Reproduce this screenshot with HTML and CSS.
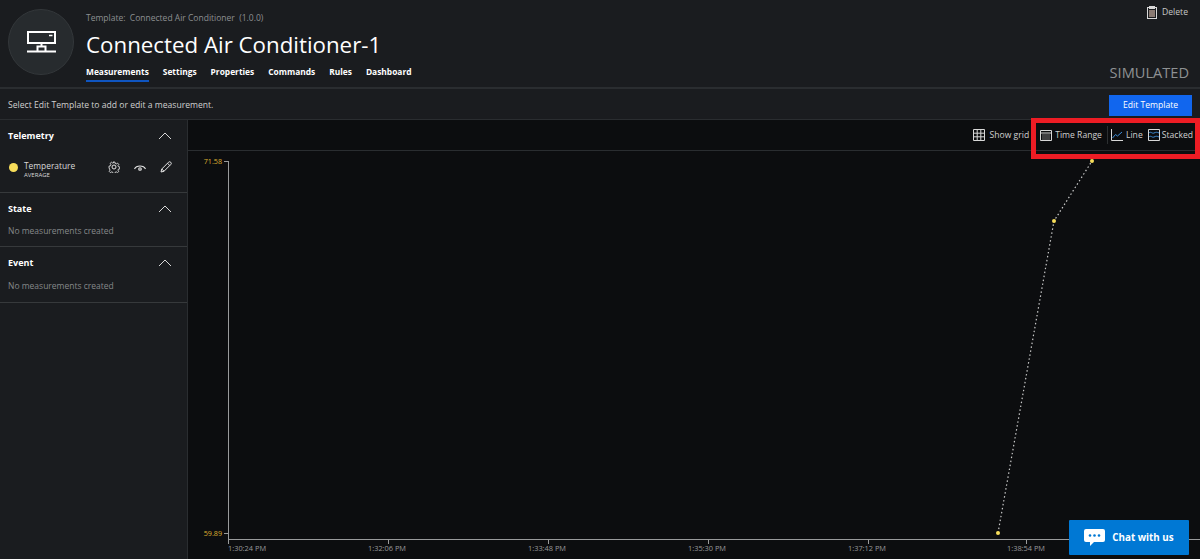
FILE: index.html
```html
<!DOCTYPE html>
<html lang="en">
  <head>
    <meta charset="UTF-8" />
    <title>Connected Air Conditioner-1</title>
    <link rel="stylesheet" href="styles.css">
  </head>

  <body>
    <header class="header">
      <div class="avatar">
        <svg width="29" height="22" viewBox="0 0 29 22" fill="none" stroke="#fff" stroke-width="2">
          <rect x="1" y="1" width="27" height="11" />
          <path d="M22 4.500h3.500" stroke-width="1.500" />
          <path d="M14.500 12v3M10.500 20.500v-5h8v5M0 20.500h29" />
        </svg>
      </div>
      <div class="title-block">
        <div class="template-line">Template:&nbsp; Connected Air Conditioner &nbsp;(1.0.0)</div>
        <h1 class="device-name">Connected Air Conditioner-1</h1>
        <nav class="tabs">
          <a class="tab active">Measurements</a>
          <a class="tab">Settings</a>
          <a class="tab">Properties</a>
          <a class="tab">Commands</a>
          <a class="tab">Rules</a>
          <a class="tab">Dashboard</a>
        </nav>
      </div>
      <div class="header-right">
        <a class="delete">
          <svg width="10" height="13" viewBox="0 0 10 13" fill="none" stroke="#d8d8d8" stroke-width="1">
            <rect x="0.5" y="1.500" width="9" height="11" />
            <rect x="2.500" y="0.500" width="5" height="2" />
            <rect x="2" y="4" width="6" height="7" fill="#8a7a72" stroke="none" />
          </svg>
          Delete
        </a>
        <div class="simulated">SIMULATED</div>
      </div>
    </header>

    <div class="notice-bar">
      <span>Select Edit Template to add or edit a measurement.</span>
      <button class="edit-btn">Edit Template</button>
    </div>

    <main class="main">
      <aside class="sidebar">
        <section class="group group-telemetry">
          <div class="group-head">
            <span>Telemetry</span>
            <svg class="chevron" width="14" height="8" viewBox="0 0 14 8"><path d="M1 7l6-6 6 6" /></svg>
          </div>
          <div class="measure">
            <span class="dot"></span>
            <div class="measure-name">
              <div>Temperature</div>
              <small>AVERAGE</small>
            </div>
            <div class="measure-icons">
              <svg width="12" height="12" viewBox="0 0 24 24" fill="none" stroke="#e6e6e6" stroke-width="2">
                <circle cx="12" cy="12" r="4" />
                <path d="M10 1h4l.7 3.200 2.400 1 2.800-1.800 2.700 2.800-1.800 2.800 1 2.400 3.200.6v4l-3.200.7-1 2.400 1.800 2.800-2.800 2.700-2.800-1.800-2.400 1-.6 3.200h-4l-.7-3.200-2.400-1-2.800 1.800-2.700-2.800 1.800-2.800-1-2.400L1 14v-4l3.200-.7 1-2.400-1.800-2.800 2.800-2.700 2.800 1.800 2.400-1z" transform="translate(1.200 1.200) scale(.9)" />
              </svg>
              <svg width="12" height="9" viewBox="0 0 24 18" fill="none" stroke="#e6e6e6" stroke-width="2.400">
                <path d="M1 12C5 4 19 4 23 12" />
                <circle cx="12" cy="12" r="2.500" />
              </svg>
              <svg width="12" height="12" viewBox="0 0 24 24" fill="none" stroke="#e6e6e6" stroke-width="2">
                <path d="M2 22l1.500-6L17 2.500a3 3 0 0 1 4.500 4.500L8 20.500zM3.500 16L8 20.500M15 4.500l4.500 4.500" />
              </svg>
            </div>
          </div>
        </section>
        <section class="group group-state">
          <div class="group-head">
            <span>State</span>
            <svg class="chevron" width="14" height="8" viewBox="0 0 14 8"><path d="M1 7l6-6 6 6" /></svg>
          </div>
          <p class="empty">No measurements created</p>
        </section>
        <section class="group group-event">
          <div class="group-head">
            <span>Event</span>
            <svg class="chevron" width="14" height="8" viewBox="0 0 14 8"><path d="M1 7l6-6 6 6" /></svg>
          </div>
          <p class="empty">No measurements created</p>
        </section>
      </aside>

      <div class="chart-pane">
        <div class="chart-tools">
          <a class="tool tool-grid">
            <svg width="12" height="12" viewBox="0 0 12 12" fill="none" stroke="#d8d8d8"><path d="M.5.5h11v11H.5zM4.200.5v11M7.800.5v11M.5 4.200h11M.5 7.800h11" /></svg>
            Show grid
          </a>
          <a class="tool tool-range">
            <svg width="12" height="12" viewBox="0 0 12 12" fill="none" stroke="#d8d8d8"><path d="M.5 1.500h11v10H.5zM.5 4h11" /><path d="M2.500 6h7M2.500 8h7M2.500 10h7" stroke-dasharray="1 1" /></svg>
            Time Range
          </a>
          <span class="tool-sep"></span>
          <a class="tool tool-line">
            <svg width="12" height="12" viewBox="0 0 12 12" fill="none"><path d="M.5 0v11.500H12" stroke="#d8d8d8" /><path d="M1.500 9l3-3.500 2 1.500L11 3" stroke="#3f8ed8" /></svg>
            Line
          </a>
          <a class="tool tool-stacked">
            <svg width="12" height="12" viewBox="0 0 12 12" fill="none"><path d="M.5.5h11v11H.5z" stroke="#d8d8d8" /><path d="M1 4c2-2 3 1 5 0s3-1 5 0M1 8c2-2 3 1 5 0s3-1 5 0" stroke="#3f8ed8" /></svg>
            Stacked
          </a>
        </div>

        <svg class="plot" viewBox="188 151 1012 408">
          <g class="axis">
            <path d="M228.500 161V540M224 161.500h4M224 533.500h4M228 539.500H1200" />
            <path d="M228.500 540v4M388.500 540v4M548.500 540v4M708.500 540v4M868.500 540v4M1026.500 540v4" />
          </g>
          <text class="y-label" x="222" y="164">71.58</text>
          <text class="y-label" x="222" y="536">59.89</text>
          <text class="x-label" x="228" y="551">1:30:24 PM</text>
          <text class="x-label mid" x="387" y="551">1:32:06 PM</text>
          <text class="x-label mid" x="547" y="551">1:33:48 PM</text>
          <text class="x-label mid" x="707" y="551">1:35:30 PM</text>
          <text class="x-label mid" x="867" y="551">1:37:12 PM</text>
          <text class="x-label mid" x="1026" y="551">1:38:54 PM</text>
          <path class="series" d="M998 533L1054 221L1092 161" />
          <circle class="point" cx="998" cy="533" r="2" />
          <circle class="point" cx="1054" cy="221" r="2" />
          <circle class="point" cx="1092" cy="161" r="2" />
        </svg>
      </div>
    </main>

    <a class="chat">
      <svg width="21" height="17" viewBox="0 0 21 17">
        <path fill="#fff" d="M2 0h17a2 2 0 0 1 2 2v9a2 2 0 0 1-2 2H10l-4 4v-4H2a2 2 0 0 1-2-2V2a2 2 0 0 1 2-2z" />
        <circle cx="6" cy="6.500" r="1.300" fill="#0078d4" />
        <circle cx="10.500" cy="6.500" r="1.300" fill="#0078d4" />
        <circle cx="15" cy="6.500" r="1.300" fill="#0078d4" />
      </svg>
      Chat with us
    </a>

    <!-- annotation from the screenshot -->
    <div class="callout"></div>
  </body>
</html>
```

FILE: styles.css
```css
html,
body {
  margin: 0;
  height: 100%;
}

body {
  display: flex;
  flex-direction: column;
  height: 559px;
  overflow: hidden;
  background-color: #0c0d0f;
  color: #fff;
  font-family: "Open Sans", "Noto Sans", Arial, sans-serif;
  font-size: 8.600px;
}

a {
  color: inherit;
}

.header {
  display: flex;
  height: 87px;
  box-sizing: border-box;
  padding: 9px 10px 0 8px;
  background-color: #1a1c1f;
}

.avatar {
  display: flex;
  align-items: center;
  justify-content: center;
  width: 64px;
  height: 64px;
  border: 1px solid #33373a;
  border-radius: 50%;
  background-color: #272b2e;
  margin-right: 12px;
}

.title-block {
  flex: 1;
}

.template-line {
  margin-top: 3px;
  color: #8c8f91;
  font-size: 8.500px;
  line-height: 12px;
}

.device-name {
  margin: 6px 0 0;
  font-size: 22.300px;
  font-weight: 400;
  line-height: 30px;
  white-space: nowrap;
}

.tabs {
  display: flex;
  gap: 14px;
  margin-top: 5px;
}

.tab {
  padding-bottom: 2px;
  border-bottom: 2px solid transparent;
  font-size: 8.400px;
  font-weight: 700;
  line-height: 13px;
}

.tab.active {
  border-bottom-color: #0f55c0;
}

.header-right {
  display: flex;
  flex-direction: column;
  align-items: flex-end;
}

.delete {
  display: flex;
  align-items: center;
  gap: 5px;
  margin-top: -3px;
  margin-right: 2px;
  color: #c8c8c8;
  line-height: 13px;
}

.simulated {
  margin-top: 43px;
  margin-right: 1px;
  color: #8e9193;
  font-size: 14.600px;
  line-height: 20px;
}

.notice-bar {
  display: flex;
  align-items: center;
  justify-content: space-between;
  height: 33px;
  box-sizing: border-box;
  padding: 2px 8px 0;
  border-top: 2px solid #2a2d30;
  border-bottom: 1px solid #2a2d30;
  background-color: #1a1c1f;
  color: #d0d0d0;
}

.edit-btn {
  width: 83px;
  height: 21px;
  padding: 0;
  border: none;
  background-color: #1166ee;
  color: #fff;
  font-family: inherit;
  font-size: 8.600px;
}

.main {
  display: flex;
  flex: 1;
  min-height: 0;
}

.sidebar {
  width: 188px;
  flex: none;
  background-color: #1a1c1f;
  border-right: 1px solid #2a2d30;
  box-sizing: border-box;
}

.group {
  box-sizing: border-box;
  padding-top: 9px;
  border-bottom: 1px solid #36393b;
}

.group-telemetry {
  height: 73px;
}

.group-state {
  height: 54px;
}

.group-event {
  height: 56px;
}

.group-head {
  display: flex;
  align-items: center;
  justify-content: space-between;
  padding: 0 15px 0 8px;
  font-size: 9px;
  font-weight: 700;
  line-height: 14px;
}

.chevron {
  fill: none;
  stroke: #d8d8d8;
}

.empty {
  margin: 8px 0 0 8px;
  color: #85888a;
  font-size: 8.500px;
  line-height: 13px;
}

.group-event .empty {
  margin-top: 9px;
}

.measure {
  display: flex;
  align-items: center;
  margin-top: 17px;
  padding-left: 9px;
}

.dot {
  width: 9px;
  height: 9px;
  border-radius: 50%;
  background-color: #f7dd5a;
  margin-top: -6px;
  margin-right: 6px;
}

.measure-name {
  width: 84px;
  color: #d8d8d8;
  font-size: 8.400px;
  line-height: 11px;
}

.measure-name small {
  display: block;
  font-size: 6px;
  line-height: 9px;
}

.measure-icons {
  display: flex;
  align-items: center;
  gap: 14px;
  margin-top: -6px;
}

.chart-pane {
  display: flex;
  flex: 1;
  flex-direction: column;
  min-width: 0;
}

.chart-tools {
  display: flex;
  align-items: center;
  justify-content: flex-end;
  height: 31px;
  flex: none;
  box-sizing: border-box;
  padding-right: 7px;
  border-bottom: 1px solid #2a2d30;
  color: #d0d0d0;
}

.tool {
  display: flex;
  align-items: center;
}

.tool-grid {
  gap: 5px;
  margin-right: 11px;
}

.tool-range {
  gap: 3px;
}

.tool-sep {
  width: 1px;
  height: 18px;
  background-color: #2c2f31;
  margin: 0 3px 0 5px;
}

.tool-line {
  gap: 3px;
  margin-right: 5px;
}

.tool-stacked {
  gap: 2px;
}

.plot {
  display: block;
  width: 1012px;
  height: 408px;
}

.axis path {
  fill: none;
  stroke: #9a9b9c;
  stroke-width: 1;
}

.y-label {
  fill: #dcae30;
  font-size: 7.200px;
  text-anchor: end;
}

.x-label {
  fill: #98999b;
  font-size: 7.400px;
}

.x-label.mid {
  text-anchor: middle;
}

.series {
  fill: none;
  stroke: #c8c8c8;
  stroke-width: 1.200;
  stroke-dasharray: 1.500 2.500;
}

.point {
  fill: #f7dd5a;
}

.chat {
  position: absolute;
  left: 1069px;
  top: 520px;
  display: flex;
  align-items: center;
  justify-content: center;
  gap: 7px;
  width: 120px;
  height: 35px;
  border-radius: 1px;
  background-color: #0078d4;
  font-size: 9.800px;
  font-weight: 700;
}

.callout {
  position: absolute;
  left: 1031px;
  top: 118px;
  width: 159px;
  height: 31px;
  border: 5px solid #ed1c24;
}
```
